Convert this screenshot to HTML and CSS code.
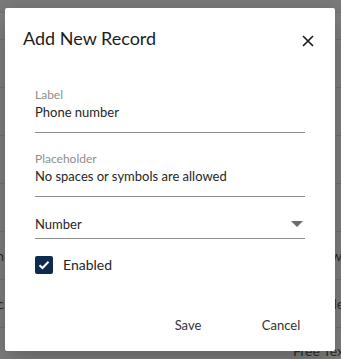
FILE: index.html
```html
<!DOCTYPE html>
<html lang="en">
<head>
    <meta charset="UTF-8">
    <meta name="viewport" content="width=device-width, initial-scale=1.0">
    <title>Add New Record</title>
    <link rel="stylesheet" href="styles.css">
</head>
<body>
    <div class="records">
        <div class="records-row head"></div>
        <div class="records-row first"></div>
        <div class="records-row"></div>
        <div class="records-row"></div>
        <div class="records-row"></div>
        <div class="records-row"></div>
        <div class="records-row">
            <span class="cell-left">Version</span>
            <span class="cell-right">Shadow</span>
        </div>
        <div class="records-row">
            <span class="cell-left">Numeric</span>
            <span class="cell-right">Multiple</span>
        </div>
        <div class="records-row last">
            <span class="cell-left"></span>
            <span class="cell-right">Free Text</span>
        </div>
    </div>

    <div class="overlay"></div>

    <div class="dialog" role="dialog" aria-labelledby="dialog-title">
        <div class="dialog-header">
            <h2 class="dialog-title" id="dialog-title">Add New Record</h2>
            <button class="close-btn" aria-label="Close">
                <svg width="12" height="12" viewBox="0 0 12 12">
                    <path d="M1 1 L11 11 M11 1 L1 11" stroke="#1d1d1d" stroke-width="1.7" fill="none"/>
                </svg>
            </button>
        </div>

        <div class="dialog-form">
            <div class="field">
                <div class="field-label">Label</div>
                <div class="field-value">Phone number</div>
            </div>
            <div class="field">
                <div class="field-label">Placeholder</div>
                <div class="field-value">No spaces or symbols are allowed</div>
            </div>
            <div class="field select">
                <div class="field-value">Number</div>
                <span class="caret"></span>
            </div>
            <label class="check-row">
                <span class="checkbox">
                    <svg width="12" height="10" viewBox="0 0 12 10">
                        <path d="M1.5 5.2 L4.5 8 L10.5 1.8" stroke="#fff" stroke-width="2" fill="none"/>
                    </svg>
                </span>
                <span class="check-text">Enabled</span>
            </label>
        </div>

        <div class="dialog-actions">
            <button class="text-btn">Save</button>
            <button class="text-btn">Cancel</button>
        </div>
    </div>
</body>
</html>
```

FILE: styles.css
```css
* {
    margin: 0;
    padding: 0;
    box-sizing: border-box;
}

html, body {
    overflow: hidden;
}

body {
    position: relative;
    width: 341px;
    height: 359px;
    background: #fff;
    font-family: 'Lato', 'Noto Sans', sans-serif;
    color: #242424;
}

/* table behind the modal */
.records {
    height: 359px;
    display: flex;
    flex-direction: column;
    overflow: hidden;
}

.records-row {
    height: 48px;
    flex-shrink: 0;
    display: flex;
    align-items: center;
    justify-content: space-between;
    border-bottom: 1px solid #e6e6e6;
    font-size: 14px;
    color: #5a5a5a;
}

.records-row.head { height: 13px; background: #f4f4f4; }
.records-row.first { height: 27px; }
.records-row.last {
    height: 31px;
    align-items: flex-end;
    border-bottom: none;
}

.cell-left {
    width: 4px;
    overflow: hidden;
    white-space: nowrap;
    direction: rtl;
}

.cell-right {
    width: 48px;
    white-space: nowrap;
    overflow: hidden;
}

.overlay {
    position: absolute;
    inset: 0;
    background: rgba(0, 0, 0, 0.5);
}

/* dialog */
.dialog {
    position: absolute;
    left: 5px;
    top: 8px;
    width: 330px;
    height: 343px;
    background: #fff;
    border-radius: 2px;
    box-shadow: 0 8px 24px rgba(0, 0, 0, 0.25);
    display: flex;
    flex-direction: column;
}

.dialog-header {
    display: flex;
    align-items: flex-start;
    justify-content: space-between;
    padding: 20px 15px 0 18px;
}

.dialog-title {
    font-size: 18px;
    font-weight: 400;
    line-height: 1.2;
    color: #1d1d1d;
}

.close-btn {
    width: 24px;
    height: 16px;
    margin-top: 5px;
    border: none;
    background: transparent;
    display: flex;
    align-items: center;
    justify-content: center;
    cursor: pointer;
}

.dialog-form {
    padding: 38px 30px 0 30px;
    display: flex;
    flex-direction: column;
}

.field {
    border-bottom: 1px solid #8c8c8c;
    padding-bottom: 11px;
    line-height: 1.2;
}

.field + .field {
    margin-top: 19px;
}

.field-label {
    font-size: 12px;
    color: #8e8e8e;
    margin-bottom: 3px;
}

.field-value {
    font-size: 13px;
    color: #262626;
}

.field.select {
    margin-top: 20px;
    padding-bottom: 6px;
    display: flex;
    align-items: center;
    justify-content: space-between;
}

.caret {
    width: 0;
    height: 0;
    margin-right: 2px;
    border-left: 6px solid transparent;
    border-right: 6px solid transparent;
    border-top: 6px solid #6b6b6b;
}

.check-row {
    margin-top: 17px;
    display: flex;
    align-items: center;
    gap: 10px;
}

.checkbox {
    width: 18px;
    height: 18px;
    border-radius: 2px;
    background: #0e2a4e;
    display: flex;
    align-items: center;
    justify-content: center;
}

.check-text {
    font-size: 14px;
    line-height: 16px;
    color: #262626;
}

.dialog-actions {
    margin-top: auto;
    display: flex;
    justify-content: flex-end;
    gap: 29px;
    padding: 0 22px 9px 0;
}

.text-btn {
    min-width: 64px;
    padding: 8px;
    border: none;
    background: transparent;
    font-family: inherit;
    font-size: 13px;
    line-height: 1.2;
    color: #333;
    cursor: pointer;
}
```
